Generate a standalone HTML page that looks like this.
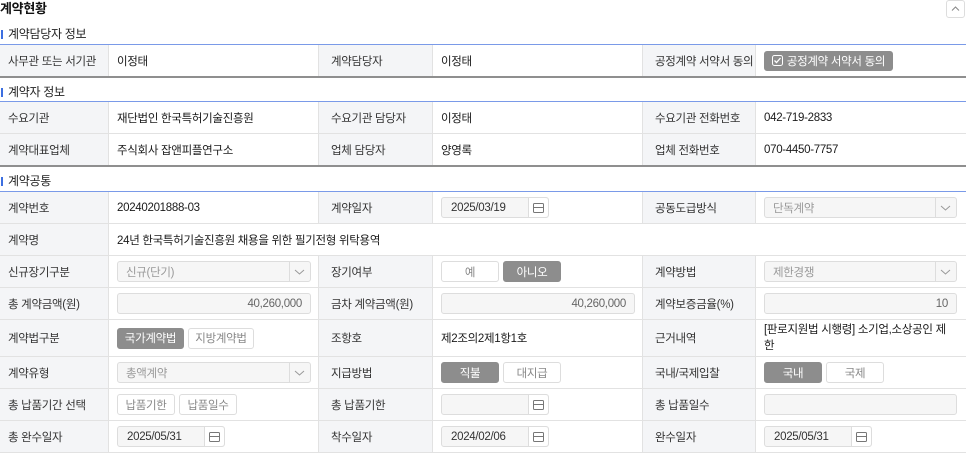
<!DOCTYPE html>
<html><head><meta charset="utf-8"><style>
*{box-sizing:border-box;margin:0;padding:0}
body{width:966px;height:454px;overflow:hidden;background:#fff;font-family:"Liberation Sans","Noto Sans CJK KR",sans-serif;font-size:11.5px;letter-spacing:-0.3px;color:#1a1a1a;position:relative}
.title{position:absolute;left:0;top:0;font-size:13px;font-weight:bold;color:#111;line-height:17px}
.up{position:absolute;left:946px;top:0;width:19px;height:18px;border:1px solid #ddd;border-radius:3px;background:#fff}
.sec{position:absolute;left:0;color:#222;line-height:14px;padding-left:8px;white-space:nowrap;font-size:12px}
.sec:before{content:"";position:absolute;left:1px;top:3px;width:2px;height:9px;background:#3d6fe0}
.grid{position:absolute;left:0;width:966px;border-top:1px solid #7a9ae8}
.row{display:grid;grid-template-columns:109px 210px 114px 210px 113px 210px;border-bottom:1px solid #e2e2e2;height:32px}
.row>div{padding-left:8px;display:flex;align-items:center;border-right:1px solid #e2e2e2;white-space:nowrap}
.row>div:last-child{border-right:none}
.row>.l{background:#f4f5f7;color:#333}
.row>.l:nth-child(3),.row>.l:nth-child(5){padding-left:12px}
.grid.g1 .row:last-child,.grid.g2 .row:last-child{border-bottom:2px solid #8f8f8f}
.inp{height:21px;border:1px solid #ddd;border-radius:3px;background:#f6f6f6;color:#999;display:flex;align-items:center;padding:0 8px;position:relative}
.sel:after{content:"";position:absolute;right:20px;top:0;bottom:0;border-left:1px solid #ddd}
.sel svg{position:absolute;right:5px;top:6px}
.date{background:#f6f6f6;color:#333;padding-left:9px}
.date .ic{position:absolute;right:0;top:0;bottom:0;width:20px;border-left:1px solid #ddd;display:flex;align-items:center;justify-content:center;background:#fff;border-radius:0 3px 3px 0}
.btn{height:21px;border-radius:3px;display:inline-flex;align-items:center;justify-content:center;margin-right:4px}
.on{background:#8d8d8d;color:#fff;border:1px solid #8d8d8d}
.off{background:#fff;color:#888;border:1px solid #ddd}
</style></head><body>
<div class="title">계약현황</div>
<div class="up"><svg width="17" height="16" viewBox="0 0 17 16"><path d="M5 9.5 L8.5 6 L12 9.5" fill="none" stroke="#888" stroke-width="1"/></svg></div>

<div class="sec" style="top:27px">계약담당자 정보</div>
<div class="grid g1" style="top:44px">
<div class="row" style="height:33px"><div class="l">사무관 또는 서기관</div><div>이정태</div><div class="l">계약담당자</div><div>이정태</div><div class="l">공정계약 서약서 동의</div><div><span class="btn on" style="width:129px;height:20px"><svg width="11" height="11" viewBox="0 0 11 11" style="margin-right:4px"><rect x="0.5" y="0.5" width="10" height="10" rx="2" fill="none" stroke="#fff"/><path d="M2.5 5.5 L4.5 7.5 L8.5 3" fill="none" stroke="#fff" stroke-width="1.3"/></svg>공정계약 서약서 동의</span></div></div>
</div>

<div class="sec" style="top:85px">계약자 정보</div>
<div class="grid g2" style="top:101px">
<div class="row"><div class="l">수요기관</div><div>재단법인 한국특허기술진흥원</div><div class="l">수요기관 담당자</div><div>이정태</div><div class="l">수요기관 전화번호</div><div>042-719-2833</div></div>
<div class="row" style="height:33px"><div class="l">계약대표업체</div><div>주식회사 잡앤피플연구소</div><div class="l">업체 담당자</div><div>양영록</div><div class="l">업체 전화번호</div><div>070-4450-7757</div></div>
</div>

<div class="sec" style="top:174px">계약공통</div>
<div class="grid" style="top:191px">
<div class="row"><div class="l">계약번호</div><div>20240201888-03</div><div class="l">계약일자</div><div><span class="inp date" style="width:108px">2025/03/19<span class="ic"><svg width="11" height="10"><rect x="0.5" y="0.5" width="10" height="9" rx="1" fill="none" stroke="#777"/><path d="M0.5 4.5H10.5" stroke="#777"/></svg></span></span></div><div class="l">공동도급방식</div><div><span class="inp sel" style="width:193px">단독계약<svg width="11" height="8"><path d="M1 2 L5.5 6 L10 2" fill="none" stroke="#999"/></svg></span></div></div>
<div class="row" style="grid-template-columns:109px 857px"><div class="l">계약명</div><div>24년 한국특허기술진흥원 채용을 위한 필기전형 위탁용역</div></div>
<div class="row"><div class="l">신규장기구분</div><div><span class="inp sel" style="width:194px">신규(단기)<svg width="11" height="8"><path d="M1 2 L5.5 6 L10 2" fill="none" stroke="#999"/></svg></span></div><div class="l">장기여부</div><div><span class="btn off" style="width:58px">예</span><span class="btn on" style="width:58px">아니오</span></div><div class="l">계약방법</div><div><span class="inp sel" style="width:193px">제한경쟁<svg width="11" height="8"><path d="M1 2 L5.5 6 L10 2" fill="none" stroke="#999"/></svg></span></div></div>
<div class="row"><div class="l">총 계약금액(원)</div><div><span class="inp" style="width:194px;justify-content:flex-end;color:#666">40,260,000</span></div><div class="l">금차 계약금액(원)</div><div><span class="inp" style="width:194px;justify-content:flex-end;color:#666">40,260,000</span></div><div class="l">계약보증금율(%)</div><div><span class="inp" style="width:193px;justify-content:flex-end;color:#666">10</span></div></div>
<div class="row" style="height:37px"><div class="l">계약법구분</div><div><span class="btn on" style="width:67px">국가계약법</span><span class="btn off" style="width:66px">지방계약법</span></div><div class="l">조항호</div><div>제2조의2제1항1호</div><div class="l">근거내역</div><div style="line-height:16px;padding-right:14px;white-space:normal">[판로지원법 시행령] 소기업,소상공인 제<br>한</div></div>
<div class="row"><div class="l">계약유형</div><div><span class="inp sel" style="width:194px">총액계약<svg width="11" height="8"><path d="M1 2 L5.5 6 L10 2" fill="none" stroke="#999"/></svg></span></div><div class="l">지급방법</div><div><span class="btn on" style="width:58px">직불</span><span class="btn off" style="width:58px">대지급</span></div><div class="l">국내/국제입찰</div><div><span class="btn on" style="width:58px">국내</span><span class="btn off" style="width:58px">국제</span></div></div>
<div class="row"><div class="l">총 납품기간 선택</div><div><span class="btn off" style="width:58px">납품기한</span><span class="btn off" style="width:58px">납품일수</span></div><div class="l">총 납품기한</div><div><span class="inp date" style="width:108px"><span class="ic"><svg width="11" height="10"><rect x="0.5" y="0.5" width="10" height="9" rx="1" fill="none" stroke="#777"/><path d="M0.5 4.5H10.5" stroke="#777"/></svg></span></span></div><div class="l">총 납품일수</div><div><span class="inp" style="width:193px"></span></div></div>
<div class="row"><div class="l">총 완수일자</div><div><span class="inp date" style="width:108px">2025/05/31<span class="ic"><svg width="11" height="10"><rect x="0.5" y="0.5" width="10" height="9" rx="1" fill="none" stroke="#777"/><path d="M0.5 4.5H10.5" stroke="#777"/></svg></span></span></div><div class="l">착수일자</div><div><span class="inp date" style="width:108px">2024/02/06<span class="ic"><svg width="11" height="10"><rect x="0.5" y="0.5" width="10" height="9" rx="1" fill="none" stroke="#777"/><path d="M0.5 4.5H10.5" stroke="#777"/></svg></span></span></div><div class="l">완수일자</div><div><span class="inp date" style="width:108px">2025/05/31<span class="ic"><svg width="11" height="10"><rect x="0.5" y="0.5" width="10" height="9" rx="1" fill="none" stroke="#777"/><path d="M0.5 4.5H10.5" stroke="#777"/></svg></span></span></div></div>
</div>
</body></html>
